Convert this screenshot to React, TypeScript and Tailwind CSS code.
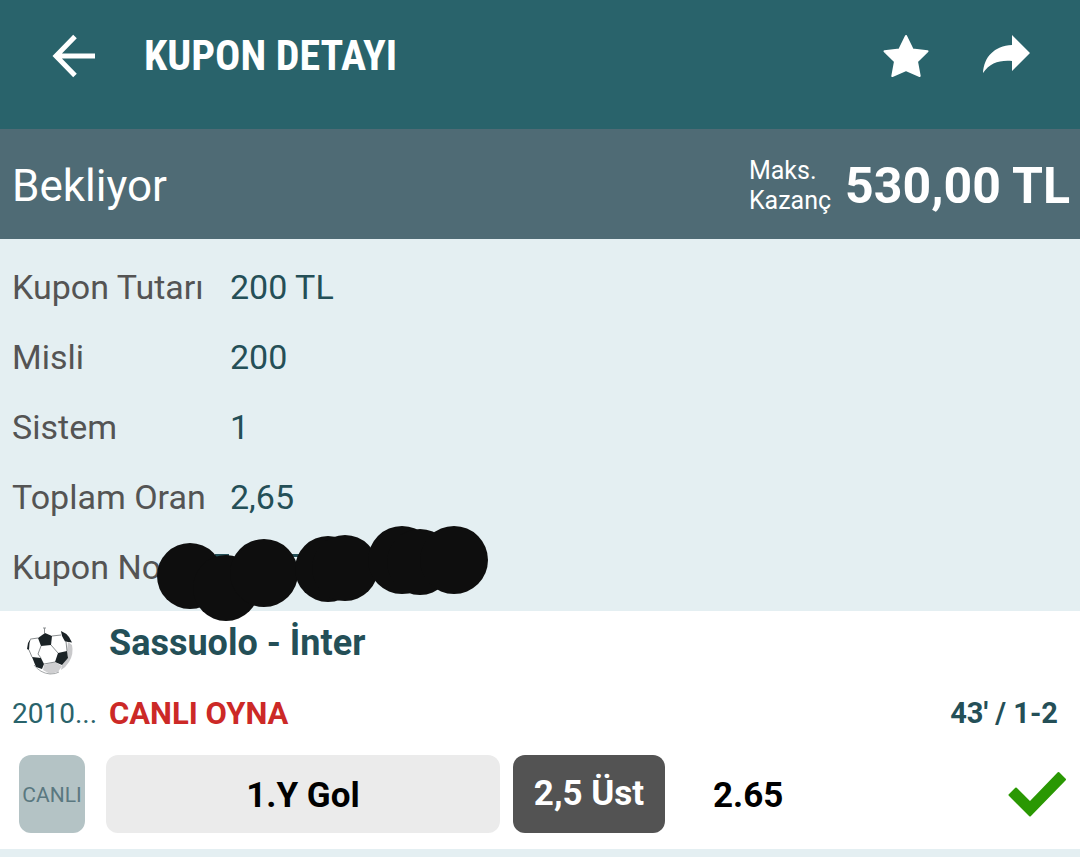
interface Detail {
  label: string
  value: string
}

interface Spot {
  cx: number
  cy: number
  r: number
}

const details: Detail[] = [
  { label: 'Kupon Tutarı', value: '200 TL' },
  { label: 'Misli', value: '200' },
  { label: 'Sistem', value: '1' },
  { label: 'Toplam Oran', value: '2,65' }
]

const spots: Spot[] = [
  { cx: 33, cy: 50, r: 33 },
  { cx: 69, cy: 62, r: 33 },
  { cx: 107, cy: 47, r: 34 },
  { cx: 171, cy: 43, r: 33 },
  { cx: 188, cy: 42, r: 33 },
  { cx: 245, cy: 34, r: 34 },
  { cx: 263, cy: 36, r: 33 },
  { cx: 297, cy: 34, r: 34 }
]

function BackIcon() {
  return (
    <svg viewBox="0 0 44 44" className="h-11 w-11" fill="none" stroke="currentColor" strokeWidth="5">
      <path d="M43 22H5M23 2.500L4 22l19 19.500" />
    </svg>
  )
}

function StarIcon() {
  return (
    <svg viewBox="0 0 46 44" className="h-11 w-[46px]" fill="currentColor" stroke="currentColor" strokeWidth="2" strokeLinejoin="round">
      <path d="M23 2L29.600 15.500 44.500 17.300 34 27.500 36.700 42 23 36 9.300 42 12 27.500 1.500 17.300 16.400 15.500z" />
    </svg>
  )
}

function ShareIcon() {
  return (
    <svg viewBox="0 0 48 40" className="h-10 w-12" fill="currentColor">
      <path d="M30 1L48 19 30 37V27C17 26 8 29 1 39 2 23 12 12 30 11z" />
    </svg>
  )
}

function BallIcon() {
  return (
    <svg viewBox="0 0 48 48" className="h-12 w-12">
      <path d="M42 15L46 18Q48 27 43 35 40 40 35 43L36 38 42 31 41 24z" fill="#c9c9cb" />
      <path d="M18 38L29 35 36 39 32 45 24 47 17 43z" fill="#cfcfd1" />
      <path d="M12 11L19 6 26 9 25 18 15 19z" fill="#1b2326" />
      <path d="M35 4Q40 6 43 10L46 15.500 39 14.500 36 9z" fill="#1b2326" />
      <path d="M5 11L2 16 1 22 3 23 3.500 16z" fill="#1b2326" />
      <path d="M6 30L15 31 18 37 16 42 10 40z" fill="#1b2326" />
      <path d="M32 26L41 24 42 31 36 38 29 35z" fill="#1b2326" />
      <path
        d="M18.500 1v5M17 1h3M26 9L35 8M40 14.500L41 24M25 18L32 26M15 19L12 27 15 31M18 37L29 35M3 23L6 30M5 12L12 11"
        fill="none"
        stroke="#8b8f91"
        strokeWidth="1"
      />
      <path d="M8 38Q14 46 24 47 30 47 33 45" fill="none" stroke="#a5a8aa" strokeWidth="1" />
    </svg>
  )
}

function CheckIcon() {
  return (
    <svg viewBox="0 0 58 46" className="h-[46px] w-[58px]" role="img" aria-label="Kazandı">
      <path
        d="M1.500 24L8 17.500 22 31.500 50.500 2 57 8.500 22 44.500z"
        fill="#2a9803"
        stroke="#2a9803"
        strokeWidth="2"
        strokeLinejoin="round"
      />
    </svg>
  )
}

// Covers the coupon number
function HiddenNumber() {
  return (
    <svg viewBox="0 0 332 96" className="absolute -top-[6px] left-[157px] h-24 w-[332px]" aria-hidden="true">
      <path d="M58 28h14v4h-14zM134 28h10v3h-10z" fill="#244f57" />
      {spots.map((spot) => (
        <circle key={spot.cx} cx={spot.cx} cy={spot.cy} r={spot.r} fill="#0e0e0e" />
      ))}
    </svg>
  )
}

export default function App() {
  return (
    <div className="min-h-screen bg-[#e4eff2] font-['Roboto','Noto_Sans',sans-serif]">
      <header className="flex h-[129px] items-start bg-[#29636b] px-[50px] pt-[26px] text-white">
        <button type="button" aria-label="Geri" className="mt-2 ml-[2px]">
          <BackIcon />
        </button>
        <h1 className="ml-[48px] flex-1 font-['Roboto_Condensed','Roboto',sans-serif] text-[42px] leading-[60px] font-bold">
          KUPON DETAYI
        </h1>
        <button type="button" aria-label="Favorilere ekle" className="mt-2">
          <StarIcon />
        </button>
        <button type="button" aria-label="Paylaş" className="mt-2 ml-[53px]">
          <ShareIcon />
        </button>
      </header>

      <section className="flex h-[110px] items-center justify-between bg-[#4f6b75] pt-1 pr-[10px] pl-3 text-white">
        <p className="text-[44px]">Bekliyor</p>
        <div className="flex items-center gap-[14px]">
          <p className="text-[25px] leading-[30px]">
            Maks.
            <br />
            Kazanç
          </p>
          <p className="text-[50px] font-bold">530,00 TL</p>
        </div>
      </section>

      <dl className="pt-[13px] pb-[9px] text-[34px]">
        {details.map((detail) => (
          <div key={detail.label} className="flex h-[70px] items-center px-3">
            <dt className="w-[218px] text-[#545454]">{detail.label}</dt>
            <dd className="text-[#244f57]">{detail.value}</dd>
          </div>
        ))}
        <div className="relative flex h-[70px] items-center px-3">
          <dt className="w-[218px] text-[#545454]">Kupon No</dt>
          <dd>
            <HiddenNumber />
          </dd>
        </div>
      </dl>

      <article className="bg-white pb-4">
        <div className="flex h-[72px] items-center">
          <div className="flex w-[109px] pt-2 pl-[26px]">
            <BallIcon />
          </div>
          <h2 className="pb-2 text-[36px] font-bold text-[#244f57]">Sassuolo - İnter</h2>
        </div>
        <div className="flex h-[60px] items-center pt-[2px] pr-[22px]">
          <span className="w-[97px] pl-3 text-[28px] whitespace-nowrap text-[#29636b]">2010...</span>
          <span className="ml-3 flex-1 text-[31px] font-bold text-[#cc2927]">CANLI OYNA</span>
          <span className="text-[29px] font-bold text-[#244f57]">43' / 1-2</span>
        </div>
        <div className="mt-3 flex h-[78px] items-stretch pr-[14px] pl-[19px]">
          <span className="flex w-[66px] items-center justify-center rounded-xl bg-[#b4c3c5] pt-1 text-[21px] text-[#5a7880]">
            CANLI
          </span>
          <button type="button" className="ml-[21px] w-[394px] rounded-xl bg-[#ebebeb] pt-1 text-[35px] font-bold text-black">
            1.Y Gol
          </button>
          <button type="button" className="ml-[13px] w-[152px] rounded-xl bg-[#535353] text-[35px] font-bold text-white">
            2,5 Üst
          </button>
          <span className="ml-12 flex flex-1 items-center pt-1 text-[35px] font-bold text-black">2.65</span>
          <div className="flex items-center">
            <CheckIcon />
          </div>
        </div>
      </article>
    </div>
  )
}
